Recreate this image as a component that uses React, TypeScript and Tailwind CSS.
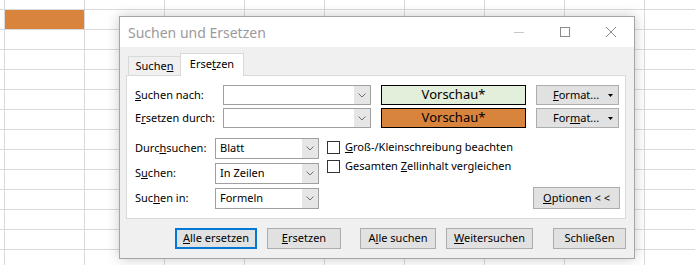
import type { ReactNode } from "react";

const cols = Array.from({ length: 9 });
const rows = Array.from({ length: 13 });

const Chevron = () => (
  <svg width="8" height="5" viewBox="0 0 8 5" className="shrink-0">
    <path d="M0.5 0.5 L4 4 L7.5 0.5" fill="none" stroke="#707070" strokeWidth="1" />
  </svg>
);

const Combo = ({ className, value }: { className: string; value?: string }) => (
  <div className={`flex border border-[#a0a0a0] bg-white ${className}`}>
    <span className="flex-1 flex items-center pl-[4px]">{value}</span>
    <div className="w-[16px] bg-[#e6e6e6] flex items-center justify-center">
      <Chevron />
    </div>
  </div>
);

const Btn = ({ className, children }: { className: string; children: ReactNode }) => (
  <div
    className={`flex items-center justify-center border border-[#adadad] bg-[#e1e1e1] text-black ${className}`}
  >
    {children}
  </div>
);

const FormatBtn = ({ children }: { children: ReactNode }) => (
  <div className="ml-[10px] w-[83px] h-full flex items-center border border-[#adadad] bg-[#e1e1e1] pl-[16px] pr-[5px]">
    <span>{children}</span>
    <svg width="5" height="3" viewBox="0 0 5 3" className="ml-auto">
      <path d="M0 0 H5 L2.5 3 Z" fill="#000" />
    </svg>
  </div>
);

const Check = ({ children }: { children: ReactNode }) => (
  <div className="flex items-center h-[19px]">
    <div className="w-[13px] h-[13px] border border-[#333] bg-white" />
    <span className="ml-[5px]">{children}</span>
  </div>
);

const SelectRow = ({ label, value }: { label: ReactNode; value: string }) => (
  <div className="flex items-center h-[21px]">
    <span className="w-[80px]">{label}</span>
    <Combo className="w-[104px] h-full" value={value} />
  </div>
);

export default function App() {
  return (
    <div className="relative w-[695px] h-[265px] overflow-hidden bg-white font-['Noto_Sans',sans-serif] text-[11px] text-black">
      {/* sheet grid */}
      <div className="flex flex-col">
        <div className="flex h-[10px]">
          <div className="w-[5px] shrink-0 border-r border-b border-[#dadada]" />
          {cols.map((_, c) => (
            <div key={c} className="w-[80px] shrink-0 border-r border-b border-[#dadada]" />
          ))}
        </div>
        {rows.map((_, r) => (
          <div key={r} className="flex h-[20px]">
            <div className="w-[5px] shrink-0 border-r border-b border-[#dadada]" />
            {cols.map((_, c) => (
              <div
                key={c}
                className={
                  r === 0 && c === 0
                    ? "w-[80px] shrink-0 border-r border-b border-[#dadada] bg-[#d9843d]"
                    : "w-[80px] shrink-0 border-r border-b border-[#dadada]"
                }
              />
            ))}
          </div>
        ))}
      </div>

      {/* dialog window */}
      <div className="absolute left-[119px] top-[16px] w-[516px] h-[243px] border border-[#a5a5a5] bg-[#f0f0f0] shadow-[0_0_12px_rgba(0,0,0,0.22)] flex flex-col">
        {/* title bar */}
        <div className="h-[30px] bg-white flex items-center">
          <span className="pl-[8px] text-[14px] text-[#9a9a9a]">Suchen und Ersetzen</span>
          <div className="ml-auto flex h-full">
            <div className="w-[46px] flex items-center justify-center">
              <svg width="10" height="10" viewBox="0 0 10 10">
                <path d="M0 5.5 H10" stroke="#c8c8c8" strokeWidth="1" />
              </svg>
            </div>
            <div className="w-[46px] flex items-center justify-center">
              <svg width="10" height="10" viewBox="0 0 10 10">
                <rect x="0.5" y="0.5" width="9" height="9" fill="none" stroke="#8a8a8a" strokeWidth="1" />
              </svg>
            </div>
            <div className="w-[46px] flex items-center justify-center">
              <svg width="10" height="10" viewBox="0 0 10 10">
                <path d="M0 0 L10 10 M10 0 L0 10" stroke="#8a8a8a" strokeWidth="1" />
              </svg>
            </div>
          </div>
        </div>

        <div className="flex flex-col pl-[6px]">
          {/* tabs */}
          <div className="relative z-10 -mb-px flex items-end h-[29px] pl-[2px]">
            <div className="mb-px w-[53px] h-[19px] flex items-center justify-center border-t border-l border-r border-[#d9d9d9] bg-[#f0f0f0]">
              <span>
                Suche<u>n</u>
              </span>
            </div>
            <div className="-ml-px w-[64px] h-[23px] flex items-center justify-center border-t border-l border-r border-[#d9d9d9] bg-white pb-[2px]">
              <span>
                Erse<u>t</u>zen
              </span>
            </div>
          </div>

          {/* tab panel */}
          <div className="w-[500px] h-[144px] border border-[#d9d9d9] bg-white flex flex-col pt-[9px] pl-[8px]">
            <div className="flex items-center h-[20px]">
              <span className="w-[88px]">
                <u>S</u>uchen nach:
              </span>
              <Combo className="w-[148px] h-full" />
              <div className="ml-[10px] w-[145px] h-full border border-black bg-[#e2efda] flex items-center justify-center text-[13px]">
                Vorschau*
              </div>
              <FormatBtn>
                <u>F</u>ormat...
              </FormatBtn>
            </div>
            <div className="mt-[3px] flex items-center h-[20px]">
              <span className="w-[88px]">
                E<u>r</u>setzen durch:
              </span>
              <Combo className="w-[148px] h-full" />
              <div className="ml-[10px] w-[145px] h-full border border-black bg-[#d9843d] flex items-center justify-center text-[13px]">
                Vorschau*
              </div>
              <FormatBtn>
                For<u>m</u>at...
              </FormatBtn>
            </div>

            <div className="mt-[10px] flex">
              <div className="flex flex-col gap-[4px]">
                <SelectRow
                  label={
                    <>
                      Durc<u>h</u>suchen:
                    </>
                  }
                  value="Blatt"
                />
                <SelectRow
                  label={
                    <>
                      S<u>u</u>chen:
                    </>
                  }
                  value="In Zeilen"
                />
                <SelectRow
                  label={
                    <>
                      Suc<u>h</u>en in:
                    </>
                  }
                  value="Formeln"
                />
              </div>
              <div className="ml-[8px] flex-1 pr-[5px] flex flex-col">
                <Check>
                  <u>G</u>roß-/Kleinschreibung beachten
                </Check>
                <Check>
                  Gesamten <u>Z</u>ellinhalt vergleichen
                </Check>
                <Btn className="mt-auto self-end w-[87px] h-[22px]">
                  <span>
                    <u>O</u>ptionen &lt; &lt;
                  </span>
                </Btn>
              </div>
            </div>
          </div>

          {/* bottom buttons */}
          <div className="mt-[9px] flex h-[21px] pl-[49px]">
            <div className="w-[82px] h-full flex items-center justify-center border-2 border-[#0078d7] bg-[#e1e1e1]">
              <span>
                <u>A</u>lle ersetzen
              </span>
            </div>
            <Btn className="ml-[10px] w-[74px] h-full">
              <span>
                <u>E</u>rsetzen
              </span>
            </Btn>
            <Btn className="ml-[19px] w-[76px] h-full">
              <span>
                A<u>l</u>le suchen
              </span>
            </Btn>
            <Btn className="ml-[10px] w-[87px] h-full">
              <span>
                <u>W</u>eitersuchen
              </span>
            </Btn>
            <Btn className="ml-[20px] w-[73px] h-full">
              <span>Schließen</span>
            </Btn>
          </div>
        </div>
      </div>
    </div>
  );
}
